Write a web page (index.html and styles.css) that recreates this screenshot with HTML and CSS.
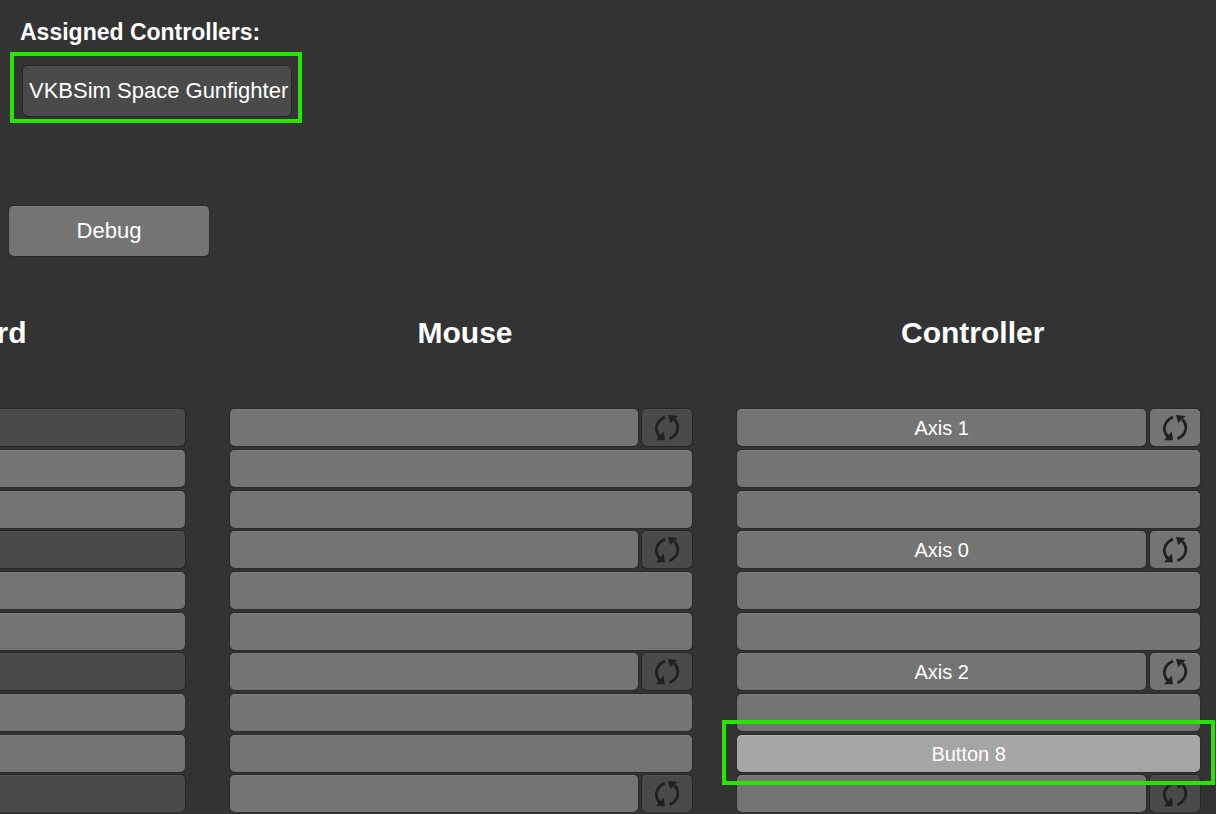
FILE: index.html
```html
<!DOCTYPE html>
<html lang="en">
<head>
<meta charset="utf-8">
<meta name="viewport" content="width=device-width, initial-scale=1">
<title>Controls</title>
<link rel="stylesheet" href="styles.css">
</head>
<body>
<svg class="symbols" aria-hidden="true">
  <symbol id="invert" viewBox="0 0 26 28">
    <path class="arc" d="M11 3C.5 8 .5 17 6 23M15.500 24.700C25.500 20 25.500 11 20.500 5.500"/>
    <path class="head" d="M2 26.200 11 26.200 9.700 17.500ZM14 1 23.500 2 16.200 9Z"/>
  </symbol>
</svg>
<main class="page">
  <header class="top">
    <h1 class="title">Assigned Controllers:</h1>
    <div class="device marked">
      <button class="btn btn-dim device-btn" type="button">VKBSim Space Gunfighter</button>
    </div>
    <button class="btn debug" type="button">Debug</button>
  </header>

  <div class="columns">
    <section class="column">
      <h2 class="heading">Keyboard</h2>
      <div class="groups">
        <div class="group">
          <button class="btn btn-dim" type="button" aria-label="Key axis 1" disabled></button>
          <button class="btn" type="button" aria-label="Key 1 positive"></button>
          <button class="btn" type="button" aria-label="Key 1 negative"></button>
        </div>
        <div class="group">
          <button class="btn btn-dim" type="button" aria-label="Key axis 2" disabled></button>
          <button class="btn" type="button" aria-label="Key 2 positive"></button>
          <button class="btn" type="button" aria-label="Key 2 negative"></button>
        </div>
        <div class="group">
          <button class="btn btn-dim" type="button" aria-label="Key axis 3" disabled></button>
          <button class="btn" type="button" aria-label="Key 3 positive"></button>
          <button class="btn" type="button" aria-label="Key 3 negative"></button>
        </div>
        <div class="group">
          <button class="btn btn-dim" type="button" aria-label="Key axis 4" disabled></button>
        </div>
      </div>
    </section>

    <section class="column">
      <h2 class="heading">Mouse</h2>
      <div class="groups">
        <div class="group">
          <div class="axis">
            <button class="btn" type="button" aria-label="Mouse axis 1"></button>
            <button class="btn btn-dim" type="button" aria-label="Invert mouse axis 1"><svg class="icon" aria-hidden="true"><use href="#invert"/></svg></button>
          </div>
          <button class="btn" type="button" aria-label="Mouse 1 positive"></button>
          <button class="btn" type="button" aria-label="Mouse 1 negative"></button>
        </div>
        <div class="group">
          <div class="axis">
            <button class="btn" type="button" aria-label="Mouse axis 2"></button>
            <button class="btn btn-dim" type="button" aria-label="Invert mouse axis 2"><svg class="icon" aria-hidden="true"><use href="#invert"/></svg></button>
          </div>
          <button class="btn" type="button" aria-label="Mouse 2 positive"></button>
          <button class="btn" type="button" aria-label="Mouse 2 negative"></button>
        </div>
        <div class="group">
          <div class="axis">
            <button class="btn" type="button" aria-label="Mouse axis 3"></button>
            <button class="btn btn-dim" type="button" aria-label="Invert mouse axis 3"><svg class="icon" aria-hidden="true"><use href="#invert"/></svg></button>
          </div>
          <button class="btn" type="button" aria-label="Mouse 3 positive"></button>
          <button class="btn" type="button" aria-label="Mouse 3 negative"></button>
        </div>
        <div class="group">
          <div class="axis">
            <button class="btn" type="button" aria-label="Mouse axis 4"></button>
            <button class="btn btn-dim" type="button" aria-label="Invert mouse axis 4"><svg class="icon" aria-hidden="true"><use href="#invert"/></svg></button>
          </div>
        </div>
      </div>
    </section>

    <section class="column">
      <h2 class="heading">Controller</h2>
      <div class="groups">
        <div class="group">
          <div class="axis">
            <button class="btn" type="button">Axis 1</button>
            <button class="btn" type="button" aria-label="Invert controller axis 1"><svg class="icon" aria-hidden="true"><use href="#invert"/></svg></button>
          </div>
          <button class="btn" type="button" aria-label="Controller 1 positive"></button>
          <button class="btn" type="button" aria-label="Controller 1 negative"></button>
        </div>
        <div class="group">
          <div class="axis">
            <button class="btn" type="button">Axis 0</button>
            <button class="btn" type="button" aria-label="Invert controller axis 2"><svg class="icon" aria-hidden="true"><use href="#invert"/></svg></button>
          </div>
          <button class="btn" type="button" aria-label="Controller 2 positive"></button>
          <button class="btn" type="button" aria-label="Controller 2 negative"></button>
        </div>
        <div class="group">
          <div class="axis">
            <button class="btn" type="button">Axis 2</button>
            <button class="btn" type="button" aria-label="Invert controller axis 3"><svg class="icon" aria-hidden="true"><use href="#invert"/></svg></button>
          </div>
          <button class="btn" type="button" aria-label="Controller 3 positive"></button>
          <div class="binding marked">
            <button class="btn btn-active" type="button">Button 8</button>
          </div>
        </div>
        <div class="group">
          <div class="axis">
            <button class="btn" type="button" aria-label="Controller axis 4"></button>
            <button class="btn btn-dim" type="button" aria-label="Invert controller axis 4"><svg class="icon" aria-hidden="true"><use href="#invert"/></svg></button>
          </div>
        </div>
      </div>
    </section>
  </div>
</main>
</body>
</html>
```
FILE: styles.css
```css
* {
  box-sizing: border-box;
}

body {
  margin: 0;
  background: #333333;
  color: #ffffff;
  font-family: "Liberation Sans", Arial, sans-serif;
}

.symbols {
  display: none;
}

.page {
  overflow: hidden;
}

.top {
  display: flex;
  flex-direction: column;
  align-items: flex-start;
  padding: 18px 9px 0;
}

.title {
  margin: 0 11px 20px;
  font-size: 23px;
  line-height: 28px;
  font-weight: 700;
}

.btn {
  display: flex;
  align-items: center;
  justify-content: center;
  width: 100%;
  min-width: 0;
  height: 37px;
  margin: 0;
  padding: 0;
  border: 0;
  border-radius: 5px;
  background: #747474;
  box-shadow: 0 0 0 1px #2a2a2a, inset 0 1px 0 #7d7d7d;
  color: #ffffff;
  font-family: inherit;
  font-size: 20px;
  line-height: 24px;
  white-space: nowrap;
}

.btn-dim {
  background: #4a4a4a;
  box-shadow: 0 0 0 1px #262626, inset 0 1px 0 #505050;
}

.btn-active {
  background: #a5a5a5;
  box-shadow: 0 0 0 1px #2a2a2a, inset 0 1px 0 #b2b2b2;
}

.device {
  width: 268px;
  margin: 0 14px 90px;
}

.device-btn {
  height: 50px;
  justify-content: flex-start;
  padding-left: 6px;
  overflow: hidden;
  font-size: 22px;
}

.debug {
  width: 200px;
  height: 50px;
  font-size: 22px;
}

/* The first column runs off the left edge of the window. */
.columns {
  display: grid;
  grid-template-columns: repeat(3, minmax(0, 1fr));
  gap: 45px;
  margin-left: -278px;
  padding: 57px 16px 0 0;
}

.heading {
  margin: 0 0 56px;
  padding-left: 8px;
  font-size: 30px;
  line-height: 40px;
  font-weight: 700;
  text-align: center;
}

.groups {
  display: grid;
  gap: 3px;
}

.group {
  display: grid;
  gap: 4px;
}

.axis {
  display: grid;
  grid-template-columns: minmax(0, 1fr) 50px;
  gap: 4px;
}

.icon {
  width: 26px;
  height: 28px;
}

.arc {
  fill: none;
  stroke: #202020;
  stroke-width: 2.7;
}

.head {
  fill: #202020;
}

.marked {
  position: relative;
}

.marked::after {
  content: "";
  position: absolute;
  z-index: 1;
  border: 4px solid #26e600;
  pointer-events: none;
}

.device::after {
  inset: -14px -11px -7px -13px;
}

.binding::after {
  inset: -15px -15px -13px;
}
```
